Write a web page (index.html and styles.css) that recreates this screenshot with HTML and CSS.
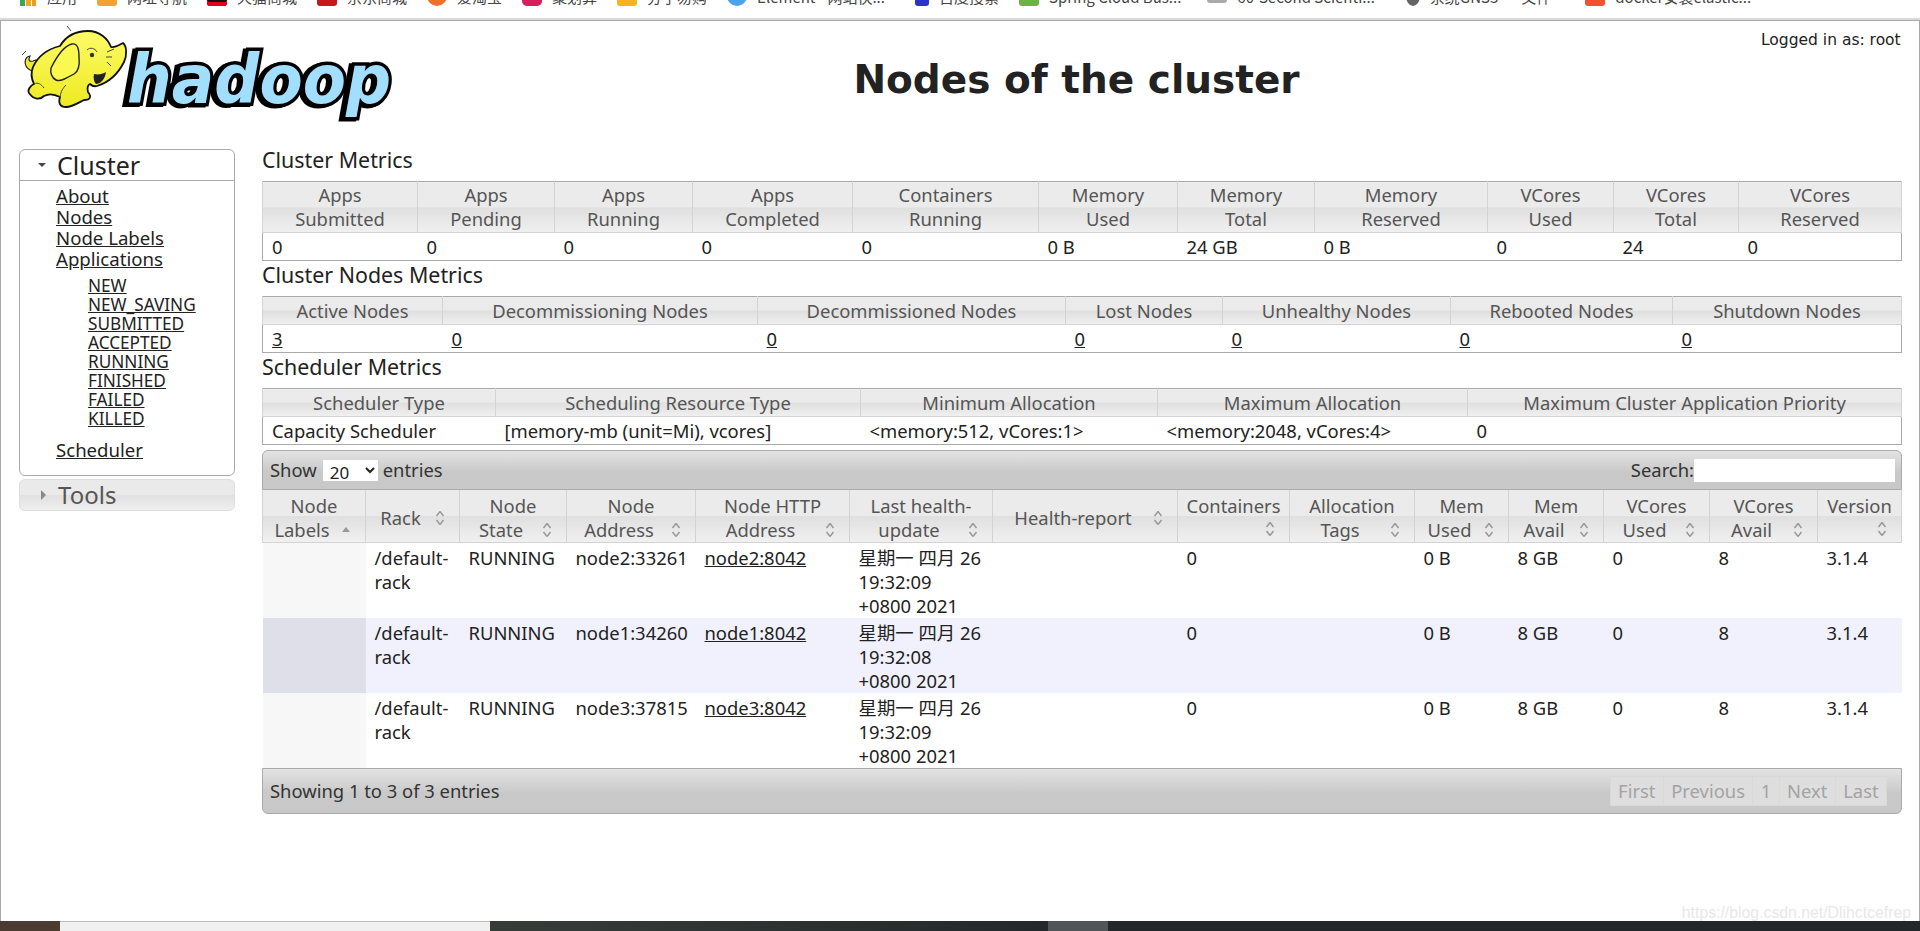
FILE: index.html
```html
<!DOCTYPE html>
<html lang="en">
<head>
<meta charset="utf-8">
<title>Nodes of the cluster</title>
<link rel="stylesheet" href="styles.css">
</head>
<body>
<div class="bookmarks">
  <div class="bm"><i class="ico ico-apps"></i><span>应用</span></div>
  <div class="bm"><i class="ico ico-orange"></i><span>网址导航</span></div>
  <div class="bm"><i class="ico ico-tmall"></i><span>天猫商城</span></div>
  <div class="bm"><i class="ico ico-jd"></i><span>京东商城</span></div>
  <div class="bm"><i class="ico ico-taobao"></i><span>爱淘宝</span></div>
  <div class="bm"><i class="ico ico-ju"></i><span>聚划算</span></div>
  <div class="bm"><i class="ico ico-gold"></i><span>分子易购</span></div>
  <div class="bm"><i class="ico ico-el"></i><span>Element - 网站快...</span></div>
  <div class="bm"><i class="ico ico-baidu"></i><span>百度搜索</span></div>
  <div class="bm"><i class="ico ico-spring"></i><span>Spring Cloud Bus...</span></div>
  <div class="bm"><i class="ico ico-sci"></i><span>60-Second Scienti...</span></div>
  <div class="bm"><i class="ico ico-gns"></i><span>系统GNS3</span></div>
  <div class="bm"><span>文件</span></div>
  <div class="bm"><i class="ico ico-dock"></i><span>docker安装elastic...</span></div>
</div>
<div class="page">
  <header class="header">
    <svg class="logo" viewBox="15 25 385 100" width="385" height="100" role="img" aria-label="Hadoop logo">
      <defs>
        <linearGradient id="yel" x1="0" y1="0" x2="0" y2="1">
          <stop offset="0" stop-color="#fdfb66"/>
          <stop offset="1" stop-color="#eeea22"/>
        </linearGradient>
      </defs>
      <text class="word" x="127" y="103" textLength="264" lengthAdjust="spacingAndGlyphs">hadoop</text>
      <path class="tail" d="M30 70 C23 66 24 57 30 56 C28 60 29 62 33 61 L36 60 C37 63 35 68 33 71 Z"/>
      <path class="ele" d="M33 67 C38 56 48 49 60 46 C66 36 76 31 88 31 C100 31 108 39 111 47 C115 48 119 45 123 43 C127 46 127 56 124 62 C118 74 110 82 97 86 C93 87 91 85 90 84 C88 85 87 88 88 92 C92 97 90 100 84 100 C78 103 72 107 66 107 C60 107 58 103 60 97 C52 93 48 94 44 96 C40 100 34 100 29 93 C27 90 31 85 34 84 C31 78 31 72 33 67 Z"/>
      <path class="ear" d="M51 68 C56 58 63 46 72 44 C78 43 79 50 79 57 C80 66 79 71 74 74 C67 78 60 82 56 80 C52 78 50 73 51 68 Z"/>
      <path class="mouth" d="M94 74 C98 75 103 74 106 72 C105 80 100 84 96 84 C94 82 93 78 94 74 Z"/>
      <circle class="eye" cx="92" cy="55" r="2.2"/>
      <path class="line" d="M87 50 C90 47 95 48 97 52 M107 52 L114 49 M106 57 L112 57 M107 62 L111 66 M67 26 L71 31 M22 55 L26 51 M60 97 C61 91 63 88 66 85 M34 84 C38 82 41 84 44 88"/>
    </svg>
    <h1 class="title">Nodes of the cluster</h1>
    <div class="logged">Logged in as: root</div>
  </header>
  <div class="layout">
    <nav class="nav">
      <div class="nav-box">
        <div class="nav-head"><i class="tri-down"></i><span>Cluster</span></div>
        <ul class="menu">
          <li><a href="#">About</a></li>
          <li><a href="#">Nodes</a></li>
          <li><a href="#">Node Labels</a></li>
          <li><a href="#">Applications</a>
            <ul class="submenu">
              <li><a href="#">NEW</a></li>
              <li><a href="#">NEW_SAVING</a></li>
              <li><a href="#">SUBMITTED</a></li>
              <li><a href="#">ACCEPTED</a></li>
              <li><a href="#">RUNNING</a></li>
              <li><a href="#">FINISHED</a></li>
              <li><a href="#">FAILED</a></li>
              <li><a href="#">KILLED</a></li>
            </ul>
          </li>
          <li><a href="#">Scheduler</a></li>
        </ul>
      </div>
      <div class="nav-tools"><i class="tri-right"></i><span>Tools</span></div>
    </nav>
    <main class="main">
      <h2 class="section first">Cluster Metrics</h2>
      <table class="metrics m1">
        <colgroup><col><col><col><col><col><col><col><col><col><col><col></colgroup>
        <thead><tr>
          <th>Apps<br>Submitted</th><th>Apps<br>Pending</th><th>Apps<br>Running</th><th>Apps<br>Completed</th><th>Containers<br>Running</th><th>Memory<br>Used</th><th>Memory<br>Total</th><th>Memory<br>Reserved</th><th>VCores<br>Used</th><th>VCores<br>Total</th><th>VCores<br>Reserved</th>
        </tr></thead>
        <tbody><tr>
          <td>0</td><td>0</td><td>0</td><td>0</td><td>0</td><td>0 B</td><td>24 GB</td><td>0 B</td><td>0</td><td>24</td><td>0</td>
        </tr></tbody>
      </table>
      <h2 class="section">Cluster Nodes Metrics</h2>
      <table class="metrics m2">
        <colgroup><col><col><col><col><col><col><col></colgroup>
        <thead><tr>
          <th>Active Nodes</th><th>Decommissioning Nodes</th><th>Decommissioned Nodes</th><th>Lost Nodes</th><th>Unhealthy Nodes</th><th>Rebooted Nodes</th><th>Shutdown Nodes</th>
        </tr></thead>
        <tbody><tr>
          <td><a href="#">3</a></td><td><a href="#">0</a></td><td><a href="#">0</a></td><td><a href="#">0</a></td><td><a href="#">0</a></td><td><a href="#">0</a></td><td><a href="#">0</a></td>
        </tr></tbody>
      </table>
      <h2 class="section">Scheduler Metrics</h2>
      <table class="metrics m3">
        <colgroup><col><col><col><col><col></colgroup>
        <thead><tr>
          <th>Scheduler Type</th><th>Scheduling Resource Type</th><th>Minimum Allocation</th><th>Maximum Allocation</th><th>Maximum Cluster Application Priority</th>
        </tr></thead>
        <tbody><tr>
          <td>Capacity Scheduler</td><td>[memory-mb (unit=Mi), vcores]</td><td>&lt;memory:512, vCores:1&gt;</td><td>&lt;memory:2048, vCores:4&gt;</td><td>0</td>
        </tr></tbody>
      </table>
      <section class="grid-wrap">
        <div class="bar bar-top">
          <label class="show">Show <select class="size"><option>20</option></select> entries</label>
          <label class="search">Search:<input class="search-input" type="text"></label>
        </div>
        <table class="nodes">
          <colgroup><col><col><col><col><col><col><col><col><col><col><col><col><col><col></colgroup>
          <thead><tr>
            <th>Node<br><svg class="sort" viewBox="0 0 10 16"><path class="on" d="M1 10 L5 5 L9 10 Z"/></svg>Labels</th>
            <th><svg class="sort" viewBox="0 0 10 16"><path d="M5 1.5 L8.5 6 M5 1.5 L1.5 6 M5 14.5 L8.5 10 M5 14.5 L1.5 10"/></svg>Rack</th>
            <th>Node<br><svg class="sort" viewBox="0 0 10 16"><path d="M5 1.5 L8.5 6 M5 1.5 L1.5 6 M5 14.5 L8.5 10 M5 14.5 L1.5 10"/></svg>State</th>
            <th>Node<br><svg class="sort" viewBox="0 0 10 16"><path d="M5 1.5 L8.5 6 M5 1.5 L1.5 6 M5 14.5 L8.5 10 M5 14.5 L1.5 10"/></svg>Address</th>
            <th>Node HTTP<br><svg class="sort" viewBox="0 0 10 16"><path d="M5 1.5 L8.5 6 M5 1.5 L1.5 6 M5 14.5 L8.5 10 M5 14.5 L1.5 10"/></svg>Address</th>
            <th>Last health-<br><svg class="sort" viewBox="0 0 10 16"><path d="M5 1.5 L8.5 6 M5 1.5 L1.5 6 M5 14.5 L8.5 10 M5 14.5 L1.5 10"/></svg>update</th>
            <th><svg class="sort" viewBox="0 0 10 16"><path d="M5 1.5 L8.5 6 M5 1.5 L1.5 6 M5 14.5 L8.5 10 M5 14.5 L1.5 10"/></svg>Health-report</th>
            <th class="stack">Containers<svg class="sort" viewBox="0 0 10 16"><path d="M5 1.5 L8.5 6 M5 1.5 L1.5 6 M5 14.5 L8.5 10 M5 14.5 L1.5 10"/></svg></th>
            <th>Allocation<br><svg class="sort" viewBox="0 0 10 16"><path d="M5 1.5 L8.5 6 M5 1.5 L1.5 6 M5 14.5 L8.5 10 M5 14.5 L1.5 10"/></svg>Tags</th>
            <th>Mem<br><svg class="sort" viewBox="0 0 10 16"><path d="M5 1.5 L8.5 6 M5 1.5 L1.5 6 M5 14.5 L8.5 10 M5 14.5 L1.5 10"/></svg>Used</th>
            <th>Mem<br><svg class="sort" viewBox="0 0 10 16"><path d="M5 1.5 L8.5 6 M5 1.5 L1.5 6 M5 14.5 L8.5 10 M5 14.5 L1.5 10"/></svg>Avail</th>
            <th>VCores<br><svg class="sort" viewBox="0 0 10 16"><path d="M5 1.5 L8.5 6 M5 1.5 L1.5 6 M5 14.5 L8.5 10 M5 14.5 L1.5 10"/></svg>Used</th>
            <th>VCores<br><svg class="sort" viewBox="0 0 10 16"><path d="M5 1.5 L8.5 6 M5 1.5 L1.5 6 M5 14.5 L8.5 10 M5 14.5 L1.5 10"/></svg>Avail</th>
            <th class="stack">Version<svg class="sort" viewBox="0 0 10 16"><path d="M5 1.5 L8.5 6 M5 1.5 L1.5 6 M5 14.5 L8.5 10 M5 14.5 L1.5 10"/></svg></th>
          </tr></thead>
          <tbody>
            <tr class="odd"><td class="sorted"></td><td>/default-<br>rack</td><td>RUNNING</td><td>node2:33261</td><td><a href="#">node2:8042</a></td><td>星期一 四月 26<br>19:32:09<br>+0800 2021</td><td></td><td>0</td><td></td><td>0 B</td><td>8 GB</td><td>0</td><td>8</td><td>3.1.4</td></tr>
            <tr class="even"><td class="sorted"></td><td>/default-<br>rack</td><td>RUNNING</td><td>node1:34260</td><td><a href="#">node1:8042</a></td><td>星期一 四月 26<br>19:32:08<br>+0800 2021</td><td></td><td>0</td><td></td><td>0 B</td><td>8 GB</td><td>0</td><td>8</td><td>3.1.4</td></tr>
            <tr class="odd"><td class="sorted"></td><td>/default-<br>rack</td><td>RUNNING</td><td>node3:37815</td><td><a href="#">node3:8042</a></td><td>星期一 四月 26<br>19:32:09<br>+0800 2021</td><td></td><td>0</td><td></td><td>0 B</td><td>8 GB</td><td>0</td><td>8</td><td>3.1.4</td></tr>
          </tbody>
        </table>
        <div class="bar bar-bottom">
          <div class="info">Showing 1 to 3 of 3 entries</div>
          <div class="pager"><span>First</span><span>Previous</span><span>1</span><span>Next</span><span>Last</span></div>
        </div>
      </section>
    </main>
  </div>
  <div class="watermark">https://blog.csdn.net/Dlihctcefrep</div>
</div>
<footer class="taskbar">
  <div class="tb tb-brown"></div>
  <div class="tb tb-light"></div>
  <div class="tb tb-dark"></div>
  <div class="tb tb-active"></div>
  <div class="tb tb-rest"><span class="clock">18:33</span></div>
</footer>
</body>
</html>
```
FILE: styles.css
```css
* { box-sizing: border-box; }
html, body { margin: 0; height: 100%; }
body {
  display: flex;
  flex-direction: column;
  height: 931px;
  overflow: hidden;
  background: #fff;
  color: #222;
  font-family: "Noto Sans", "Noto Sans CJK SC", sans-serif;
  font-size: 18.4px;
  line-height: 24px;
}
a { color: #222; text-decoration: underline; }

/* browser bookmarks strip, cropped at the top */
.bookmarks {
  display: flex;
  gap: 20px;
  flex: none;
  height: 21px;
  padding-left: 20px;
  overflow: hidden;
  background: linear-gradient(#fff 18px, #d9d9df 18px, #d9d9df 20px, #aaa 20px);
  font-family: "Noto Sans CJK SC", sans-serif;
  font-size: 15px;
  color: #444;
}
.bm { display: flex; align-items: flex-start; gap: 10px; height: 6px; margin-top: -14px; white-space: nowrap; }
.bm:nth-child(9) { margin-left: 10px; }
.bm:nth-child(11) { margin-left: 6px; }
.bm:nth-child(12) { margin-left: 11px; }
.bm:nth-child(13) { margin-left: 3px; }
.bm:nth-child(14) { margin-left: 14px; }
.bm span { line-height: 22px; height: 20px; display: block; overflow: visible; }
.ico { display: block; width: 20px; height: 20px; border-radius: 3px; flex: none; }
.ico-apps { background: linear-gradient(90deg, #3aa757 33%, #fff 33%, #fff 40%, #f4a523 40%, #f4a523 66%, #fff 66%, #fff 73%, #e8a010 73%); width: 16px; border-radius: 0; margin-right: 1px; }
.ico-orange { background: #f5a030; }
.ico-tmall { background: #111; box-shadow: inset 0 -4px 0 #e2001a; }
.ico-jd { background: #c9151e; }
.ico-taobao { background: #f0702a; border-radius: 50%; }
.ico-ju { background: #d81e5b; border-radius: 5px; }
.ico-gold { background: #f7b21d; }
.ico-el { background: #4aa3ee; border-radius: 2px 2px 10px 10px; }
.ico-baidu { background: #2932c9; width: 14px; }
.ico-spring { background: #6db33f; }
.ico-sci { background: #aaa; height: 17px; }
.ico-gns { background: #666; width: 14px; border-radius: 50%; }
.ico-dock { background: #f0532d; }

/* page frame */
.page {
  position: relative;
  flex: 1;
  min-height: 0;
  border-left: 1px solid #aaa;
  border-right: 1px solid #aaa;
}
.header { display: flex; height: 125px; }
.logo { flex: none; margin: 4px -8px 0 14px; }
.word {
  font-family: "DejaVu Sans", sans-serif;
  font-weight: 700;
  font-style: italic;
  font-size: 68px;
  fill: #a2dfff;
  stroke: #000;
  stroke-width: 7px;
  stroke-linejoin: miter;
  paint-order: stroke;
  filter: drop-shadow(-3px 1px 0 #000);
}
.ele { fill: url(#yel); stroke: #111; stroke-width: 1.8px; stroke-linejoin: round; }
.ear { fill: #fbf850; stroke: #222; stroke-width: 1.4px; }
.tail { fill: #eeea30; stroke: #222; stroke-width: 1.2px; }
.mouth { fill: #222; }
.eye { fill: #333; }
.line { fill: none; stroke: #444; stroke-width: 1px; }
.title {
  flex: 1;
  margin: 34px 0 0;
  text-align: center;
  font-family: "DejaVu Sans", sans-serif;
  font-size: 39px;
  line-height: 50px;
  font-weight: 700;
  color: #222;
}
.logged {
  flex: none;
  width: 158px;
  padding-top: 11px;
  font-family: "DejaVu Sans", sans-serif;
  font-size: 15.5px;
  line-height: 16px;
  white-space: nowrap;
}

.layout { display: flex; align-items: flex-start; padding-left: 18px; }

/* left navigation */
.nav { flex: none; width: 216px; margin-top: 3px; margin-right: 27px; }
.nav-box { height: 327px; border: 1px solid #aaa; border-radius: 6px; }
.nav-head {
  display: flex;
  align-items: center;
  height: 31px;
  padding-left: 18px;
  border-bottom: 1px solid #aaa;
  font-size: 25px;
  color: #222;
}
.tri-down { width: 0; height: 0; margin-right: 11px; border: 4.5px solid transparent; border-top: 4.5px solid #444; border-bottom: 0; }
.tri-right { width: 0; height: 0; margin-right: 12px; border: 5px solid transparent; border-left: 5px solid #888; border-right: 0; }
.menu { list-style: none; margin: 0; padding: 4px 0 0 36px; line-height: 21px; font-size: 18.6px; }
.submenu { list-style: none; margin: 7px 0 11px; padding-left: 32px; font-size: 17.2px; line-height: 19px; }
.nav-tools {
  display: flex;
  align-items: center;
  height: 32px;
  margin-top: 3px;
  padding-left: 21px;
  border: 1px solid #ddd;
  border-radius: 6px;
  background: linear-gradient(#eaeaea 50%, #e0e0e0 50%, #efefef 100%);
  font-size: 24px;
  color: #555;
}

/* metric tables */
.main { flex: 1; min-width: 0; margin-right: 17px; }
.section { margin: 0; height: 35px; font-size: 21.4px; line-height: 28px; font-weight: 400; color: #222; }
table { width: 100%; table-layout: fixed; border-collapse: collapse; }
.metrics { border: 1px solid #aaa; }
th {
  padding: 1px 4px;
  font-weight: 400;
  color: #555;
  text-align: center;
  border: 1px solid #d3d3d3;
  border-top: 0;
  background: linear-gradient(#ebebeb 50%, #dfdfdf 50%, #f0f0f0 100%);
  white-space: nowrap;
}
.metrics td { padding: 2px 9px 1px; height: 28px; white-space: nowrap; }
.m1 th { height: 51px; }
.m2 th, .m3 th { height: 28px; }
.m1 col:nth-child(1) { width: 155px; }
.m1 col:nth-child(2) { width: 137px; }
.m1 col:nth-child(3) { width: 138px; }
.m1 col:nth-child(4) { width: 160px; }
.m1 col:nth-child(5) { width: 186px; }
.m1 col:nth-child(6) { width: 139px; }
.m1 col:nth-child(7) { width: 137px; }
.m1 col:nth-child(8) { width: 173px; }
.m1 col:nth-child(9) { width: 126px; }
.m1 col:nth-child(10) { width: 125px; }
.m2 col:nth-child(1) { width: 180px; }
.m2 col:nth-child(2) { width: 315px; }
.m2 col:nth-child(3) { width: 308px; }
.m2 col:nth-child(4) { width: 157px; }
.m2 col:nth-child(5) { width: 228px; }
.m2 col:nth-child(6) { width: 222px; }
.m3 col:nth-child(1) { width: 233px; }
.m3 col:nth-child(2) { width: 365px; }
.m3 col:nth-child(3) { width: 297px; }
.m3 col:nth-child(4) { width: 310px; }

/* nodes data table */
.grid-wrap { margin-top: 5px; }
.bar {
  display: flex;
  align-items: center;
  justify-content: space-between;
  border: 1px solid #aaa;
  background: linear-gradient(#e3e3e3, #c9c9c9 55%, #c8c8c8);
  color: #333;
}
.bar-top { height: 40px; padding: 0 6px 0 7px; border-radius: 6px 6px 0 0; }
.bar-bottom { height: 46px; padding: 0 14px 0 7px; border-radius: 0 0 6px 6px; }
.show, .search { display: flex; align-items: center; }
.size {
  width: 55px;
  height: 21px;
  margin: 0 5px 0 6px;
  padding: 0 0 0 3px;
  border: 0;
  background-color: #fff;
  color: #222;
  font: inherit;
  font-size: 17px;
}
.search-input { width: 201px; height: 23px; border: 0; padding: 0; background: #fff; }
.nodes th { height: 52px; padding: 4px 2px 0; }
.nodes td { padding: 3px 9px 0; height: 75px; vertical-align: top; white-space: nowrap; }
.nodes col:nth-child(1) { width: 103px; }
.nodes col:nth-child(2) { width: 94px; }
.nodes col:nth-child(3) { width: 107px; }
.nodes col:nth-child(4) { width: 129px; }
.nodes col:nth-child(5) { width: 154px; }
.nodes col:nth-child(6) { width: 143px; }
.nodes col:nth-child(7) { width: 185px; }
.nodes col:nth-child(8) { width: 112px; }
.nodes col:nth-child(9) { width: 125px; }
.nodes col:nth-child(10) { width: 94px; }
.nodes col:nth-child(11) { width: 95px; }
.nodes col:nth-child(12) { width: 106px; }
.nodes col:nth-child(13) { width: 108px; }
.sort { float: right; width: 10px; height: 16px; margin: 4px 12px 0 2px; }
.sort path { fill: none; stroke: #999; stroke-width: 1.5px; }
.sort path.on { fill: #999; stroke: none; }
.stack .sort { float: none; display: block; margin: 3px 12px 5px auto; }
.nodes .even td { background: #f0f1fc; }
.nodes .odd .sorted { background: #f7f7f7; }
.nodes .even .sorted { background: #dfdfea; }

/* pagination */
.pager { display: flex; height: 30px; }
.pager span {
  display: flex;
  align-items: center;
  padding: 0 7.4px;
  border: 1px solid #d9d9d9;
  border-left: 0;
  background: #dedede;
  color: #a3a3a3;
}
.pager span:first-child { border-left: 1px solid #d9d9d9; }

.watermark {
  position: absolute;
  right: 8px;
  top: 882px;
  font-family: "Liberation Sans", sans-serif;
  font-size: 15.8px;
  line-height: 20px;
  color: #e8e8e8;
}

/* windows taskbar, cropped at the bottom */
.taskbar { display: flex; flex: none; height: 10px; overflow: hidden; }
.tb { height: 100%; }
.tb-brown { width: 60px; background: #4c3b31; }
.tb-light { width: 430px; background: #f0f0f0; border-top: 1px solid #bbb; }
.tb-dark { width: 558px; background: linear-gradient(90deg, #363d39, #23282b); }
.tb-active { width: 60px; background: #505558; }
.tb-rest { flex: 1; background: #22272a; padding: 6px 0 0 680px; }
.clock { display: block; color: #fff; font-family: "Noto Sans", sans-serif; font-size: 14px; line-height: 18px; }
```
